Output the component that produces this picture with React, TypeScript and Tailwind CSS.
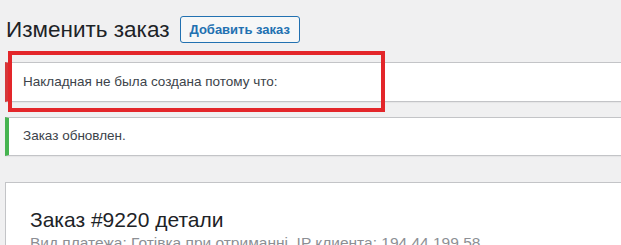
export default function App() {
  return (
    <div className="relative w-[621px] h-[245px] overflow-hidden bg-[#f0f0f1] font-['Liberation_Sans',Arial,sans-serif] text-[#3c434a]">
      <div className="flex items-center pl-[6px] pt-[16px] gap-[10px]">
        <h1 className="text-[22.5px] leading-[27px] font-normal text-[#1d2327]">Изменить заказ</h1>
        <button className="h-[27px] px-[9px] rounded-[3px] border border-[#2271b1] bg-[#f6f7f7] text-[13px] font-semibold text-[#2271b1] leading-none">
          Добавить заказ
        </button>
      </div>

      <div className="ml-[5px] -mr-[20px] mt-[19px] h-[40px] flex items-center bg-white border border-[#c3c4c7] border-l-4 border-l-[#d63638] pl-[14px] text-[13.5px] shadow-[0_1px_1px_rgba(0,0,0,0.04)]">
        Накладная не была создана потому что:
      </div>

      <div className="ml-[5px] -mr-[20px] mt-[15px] h-[39px] flex items-center bg-white border border-[#c3c4c7] border-l-4 border-l-[#46b450] pl-[14px] text-[13.5px] shadow-[0_1px_1px_rgba(0,0,0,0.04)]">
        Заказ обновлен.
      </div>

      <div className="ml-[5px] -mr-[20px] mt-[26px] h-[120px] bg-white border border-[#c3c4c7] pl-[24px] pt-[24px]">
        <h2 className="text-[21px] leading-[26px] font-normal text-[#1d2327]">Заказ #9220 детали</h2>
        <p className="text-[15.5px] leading-[20px] text-[#8c8f94]">
          Вид платежа: Готівка при отриманні. IP клиента: 194.44.199.58
        </p>
      </div>

      <div className="absolute left-[8px] top-[51px] w-[377px] h-[61px] border-4 border-[#e3262a]"></div>
    </div>
  );
}
